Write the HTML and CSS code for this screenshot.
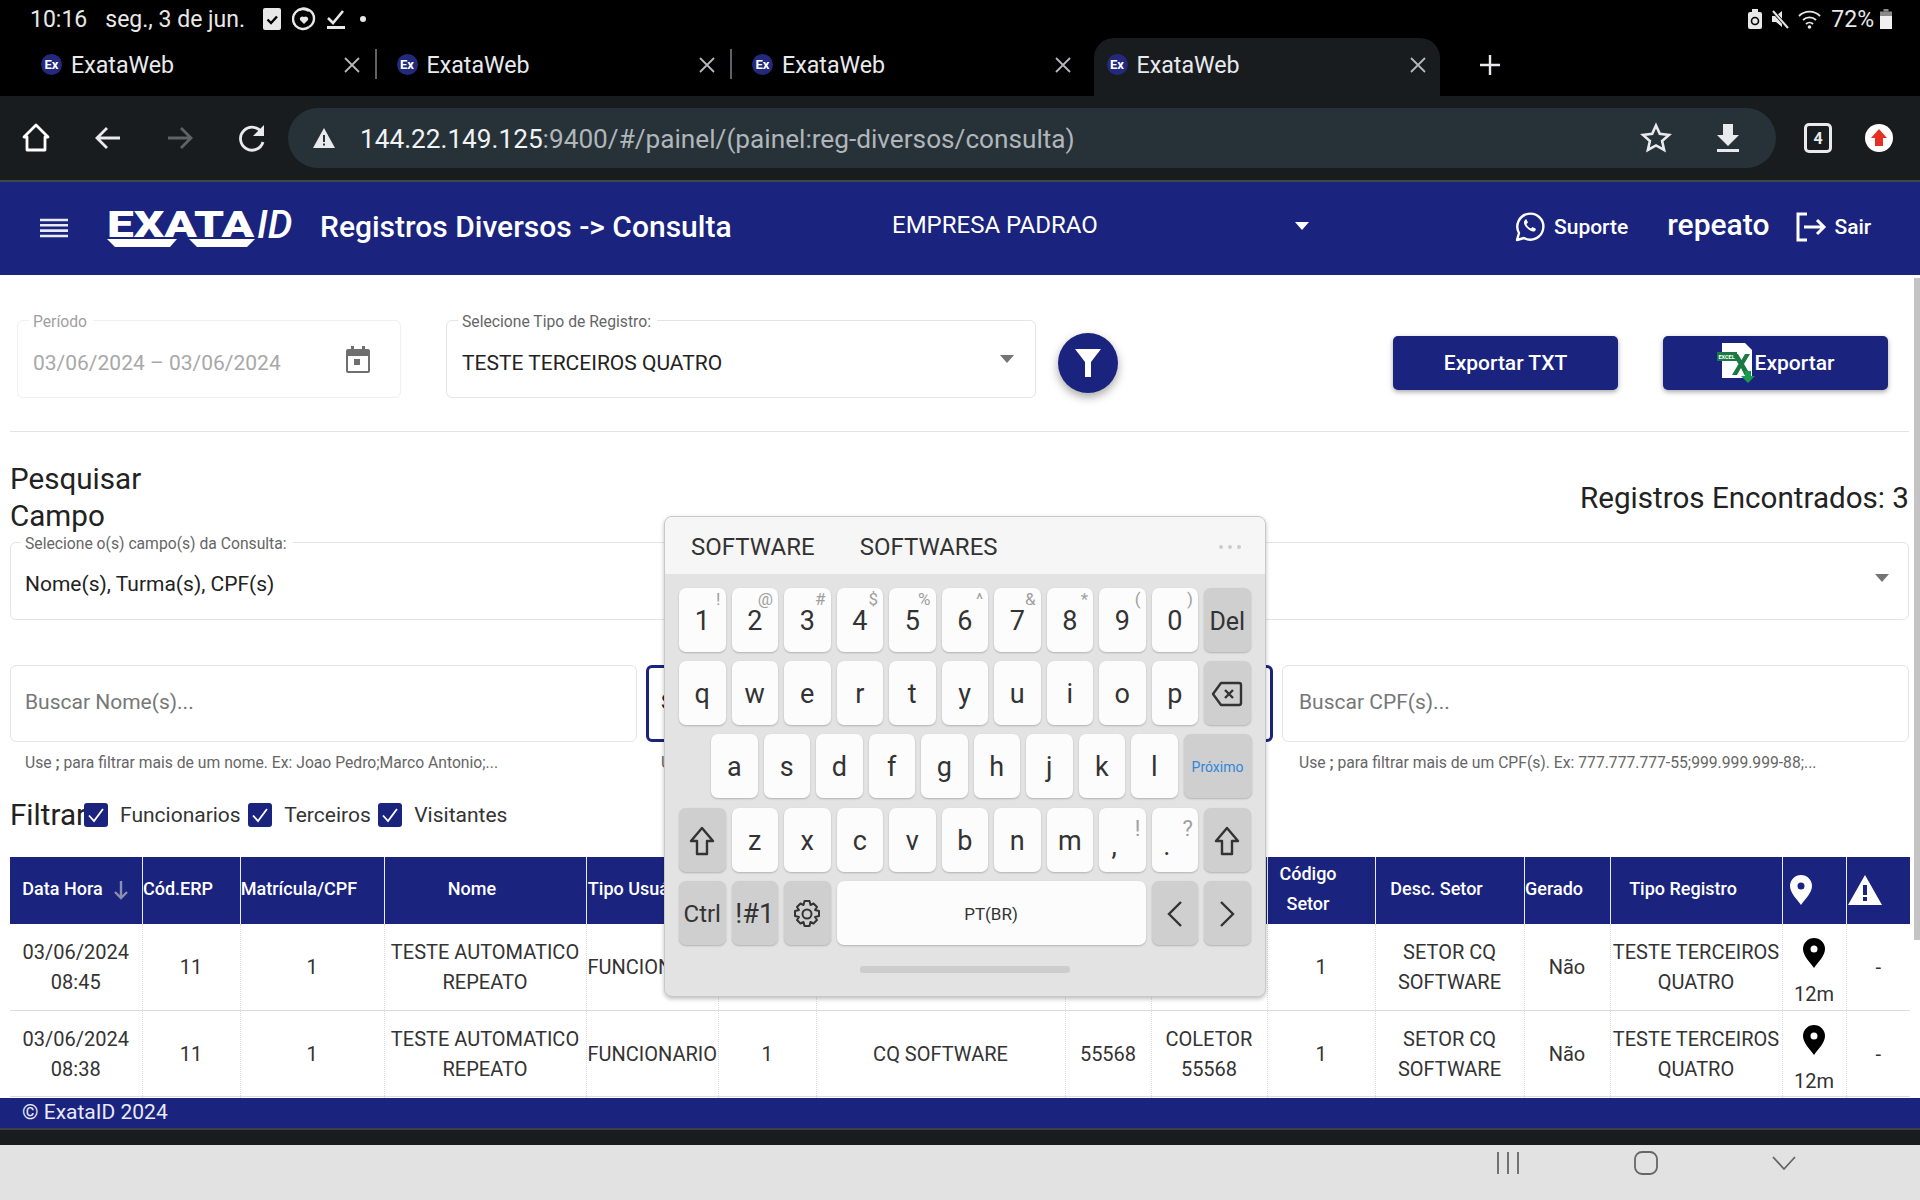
FILE: index.html
```html
<!DOCTYPE html>
<html lang="pt-BR">
<head>
  <meta charset="UTF-8" />
  <title>ExataWeb</title>
  <link rel="stylesheet" href="styles.css">
</head>
<body>
  <div class="status-bar">
    <span class="clock">10:16</span>
    <span class="date">seg., 3 de jun.</span>
    <svg class="st-icon" width="22" height="24" viewBox="0 0 22 24"><rect x="2" y="1" width="18" height="22" rx="2" fill="#e8e8e8"/><path d="M6.500 12.500l3.500 3.500 6-6.500" fill="none" stroke="#000" stroke-width="2.400"/></svg>
    <svg class="st-icon" width="24" height="24" viewBox="0 0 24 24"><path d="M17 4a10 10 0 1 0 0 16" fill="none" stroke="#e8e8e8" stroke-width="2.400"/><path d="M7 3a10 10 0 0 1 15 9 10 10 0 0 1-5 8" fill="none" stroke="#e8e8e8" stroke-width="2.400"/><path d="M12 17l-4-4a2.600 2.600 0 0 1 4-3 2.600 2.600 0 0 1 4 3z" fill="#e8e8e8"/></svg>
    <svg class="st-icon" width="22" height="24" viewBox="0 0 22 24"><path d="M3 11l5 5 10-12" fill="none" stroke="#e8e8e8" stroke-width="2.600"/><rect x="2" y="19" width="18" height="3" fill="#e8e8e8"/></svg>
    <span class="st-dot"></span>
    <span class="st-right">
      <svg width="16" height="22" viewBox="0 0 16 22"><path d="M5 1h6v3h2a2 2 0 0 1 2 2v13a2 2 0 0 1-2 2H3a2 2 0 0 1-2-2V6a2 2 0 0 1 2-2h2z" fill="#e8e8e8"/><circle cx="8" cy="13" r="3.500" fill="none" stroke="#000" stroke-width="1.600"/></svg>
      <svg width="22" height="22" viewBox="0 0 22 22"><path d="M3 8h4l6-5v16l-6-5H3z" fill="#e8e8e8"/><path d="M3 2l16 18" stroke="#000" stroke-width="3.400"/><path d="M4 3l15 17" stroke="#e8e8e8" stroke-width="2"/></svg>
      <svg width="26" height="22" viewBox="0 0 26 22"><g fill="none" stroke="#e8e8e8" stroke-width="1.800"><path d="M2 8a15 15 0 0 1 21 0"/><path d="M6 12a9.500 9.500 0 0 1 13 0"/><path d="M9 16a5 5 0 0 1 7 0"/></g><circle cx="12.500" cy="19" r="1.800" fill="#e8e8e8"/></svg>
      <span class="battery-text">72%</span>
      <svg width="12" height="24" viewBox="0 0 12 24"><rect x="3.500" y="2" width="5" height="2.500" fill="#8a8a8a"/><rect x="0" y="4.500" width="12" height="5" fill="#8a8a8a"/><rect x="0" y="9" width="12" height="13" fill="#f0f0f0"/></svg>
    </span>
  </div>

  <div class="tab-strip">
    <div class="tab">
      <span class="favicon">Ex</span><span class="tab-title">ExataWeb</span>
      <svg class="tab-close" width="16" height="16" viewBox="0 0 16 16"><path d="M1 1l14 14M15 1L1 15" stroke="#b5b8bb" stroke-width="1.800"/></svg>
    </div>
    <div class="tab">
      <span class="favicon">Ex</span><span class="tab-title">ExataWeb</span>
      <svg class="tab-close" width="16" height="16" viewBox="0 0 16 16"><path d="M1 1l14 14M15 1L1 15" stroke="#b5b8bb" stroke-width="1.800"/></svg>
    </div>
    <div class="tab tab-third">
      <span class="favicon">Ex</span><span class="tab-title">ExataWeb</span>
      <svg class="tab-close" width="16" height="16" viewBox="0 0 16 16"><path d="M1 1l14 14M15 1L1 15" stroke="#b5b8bb" stroke-width="1.800"/></svg>
    </div>
    <div class="tab tab-active">
      <span class="favicon">Ex</span><span class="tab-title">ExataWeb</span>
      <svg class="tab-close" width="16" height="16" viewBox="0 0 16 16"><path d="M1 1l14 14M15 1L1 15" stroke="#b5b8bb" stroke-width="1.800"/></svg>
    </div>
    <svg class="tab-new" width="24" height="24" viewBox="0 0 24 24"><path d="M12 2v20M2 12h20" stroke="#e8eaed" stroke-width="2.400"/></svg>
  </div>

  <div class="toolbar">
    <svg class="tb-icon" width="32" height="32" viewBox="0 0 32 32"><path d="M16 3L4 15v0h3v13h18V15h3z" fill="none" stroke="#fff" stroke-width="2.800" stroke-linejoin="round"/></svg>
    <svg class="tb-icon" width="32" height="32" viewBox="0 0 32 32"><path d="M28 16H6M15 6L5 16l10 10" fill="none" stroke="#e8eaed" stroke-width="2.800"/></svg>
    <svg class="tb-icon" width="32" height="32" viewBox="0 0 32 32"><path d="M4 16h22M17 6l10 10-10 10" fill="none" stroke="#5f6368" stroke-width="2.800"/></svg>
    <svg class="tb-icon" width="32" height="32" viewBox="0 0 32 32"><path d="M26 11a11.500 11.500 0 1 0 1 9" fill="none" stroke="#e8eaed" stroke-width="2.800"/><path d="M28 3v11H17z" fill="#e8eaed"/></svg>
    <div class="url-pill">
      <svg class="url-warn" width="24" height="22" viewBox="0 0 24 22"><path d="M12 1l11 20H1z" fill="#e8eaed"/><rect x="11" y="8" width="2" height="7" fill="#263238"/><rect x="11" y="16.500" width="2" height="2" fill="#263238"/></svg>
      <span class="url-text"><span class="url-host">144.22.149.125</span>:9400/#/painel/(painel:reg-diversos/consulta)</span>
      <svg class="url-star" width="32" height="32" viewBox="0 0 32 32"><path d="M16 3.500l3.800 8.400 9.200 1-6.900 6.100 2 9-8.100-4.600L7.900 28l2-9L3 12.900l9.200-1z" fill="none" stroke="#e8eaed" stroke-width="2.600"/></svg>
      <svg class="url-down" width="28" height="32" viewBox="0 0 28 32"><path d="M9 2h10v11h6L14 24 3 13h6z" fill="#e8eaed"/><rect x="3" y="27" width="22" height="3" fill="#e8eaed"/></svg>
    </div>
    <span class="tab-count">4</span>
    <span class="avatar">
      <svg width="18" height="20" viewBox="0 0 18 20"><path d="M9 1l8 9h-4v8H5v-8H1z" fill="#e53124"/></svg>
    </span>
  </div>
  <div class="toolbar-line"></div>

  <header class="app-header">
    <svg class="menu-icon" width="28" height="20" viewBox="0 0 28 20"><path d="M0 2h28M0 7.300h28M0 12.600h28M0 18h28" stroke="#e8eaf6" stroke-width="2.600"/></svg>
    <div class="logo">
      <span class="logo-main">EXATA</span><span class="logo-id">ID</span>
      <svg class="logo-swoosh" width="148" height="9" viewBox="0 0 148 9"><path d="M0 0h70l-7 8H8zM82 0h66l-8 8H90z" fill="#fff"/></svg>
    </div>
    <h1 class="page-title">Registros Diversos -&gt; Consulta</h1>
    <span class="company">EMPRESA PADRAO</span>
    <span class="company-caret"></span>
    <svg class="wa-icon" width="32" height="32" viewBox="0 0 32 32"><path d="M3 29l2-7a13 13 0 1 1 5 5z" fill="none" stroke="#fff" stroke-width="2.400" stroke-linejoin="round"/><path d="M11 9c-2 2-1 5 2 8s6 4.500 8 3c1-1 1-2 .5-2.500l-3-1.500-1.500 1.500c-2-.5-4-2.500-4.500-4.500l1.500-1.500-1.500-3c-.5-.5-1-.500-1.500.5z" fill="#fff"/></svg>
    <span class="head-link">Suporte</span>
    <span class="user-name">repeato</span>
    <svg class="exit-icon" width="32" height="32" viewBox="0 0 32 32"><path d="M12 3H3v26h9" fill="none" stroke="#fff" stroke-width="3"/><path d="M9 16h20M22 9l7 7-7 7" fill="none" stroke="#fff" stroke-width="3"/></svg>
    <span class="head-link">Sair</span>
  </header>

  <main class="content">
    <div class="top-row">
      <div class="field field-period">
        <label class="field-label">Período</label>
        <span class="field-value muted">03/06/2024 – 03/06/2024</span>
        <svg class="cal-icon" width="26" height="28" viewBox="0 0 26 28"><path d="M3 4h3V1h3v3h8V1h3v3h3a2 2 0 0 1 2 2v20a2 2 0 0 1-2 2H3a2 2 0 0 1-2-2V6a2 2 0 0 1 2-2zm0 7v15h20V11z" fill="#6f6f6f"/><rect x="9" y="14" width="6" height="6" fill="#6f6f6f"/></svg>
      </div>
      <div class="field field-type">
        <label class="field-label">Selecione Tipo de Registro:</label>
        <span class="field-value">TESTE TERCEIROS QUATRO</span>
        <span class="caret"></span>
      </div>
      <button class="fab" type="button">
        <svg width="28" height="30" viewBox="0 0 28 30"><path d="M1 1h26L17 14v15h-6V14z" fill="#fff"/></svg>
      </button>
      <button class="export-btn export-txt" type="button">Exportar TXT</button>
      <button class="export-btn" type="button">
        <svg width="38" height="40" viewBox="0 0 38 40"><path d="M5 0h23l7 7v28H5z" fill="#fff"/><path d="M15 11h6l3.500 6 3.500-6h5l-6 10 6.500 11h-6l-3.500-7-4 7h-5l6.500-11z" fill="#1b7a43"/><rect x="0" y="9" width="20" height="9" fill="#1b7a43"/><text class="excel-tag" x="1.500" y="16">EXCEL</text><path d="M28 28h6v5h4l-7 7-7-7h4z" fill="#1b9a4f"/></svg>
        Exportar
      </button>
    </div>
    <hr class="divider">

    <div class="search-head">
      <h2 class="search-title">Pesquisar<br>Campo</h2>
      <span class="found">Registros Encontrados: 3</span>
    </div>
    <div class="field field-wide">
      <label class="field-label">Selecione o(s) campo(s) da Consulta:</label>
      <span class="field-value">Nome(s), Turma(s), CPF(s)</span>
      <span class="caret"></span>
    </div>

    <div class="search-grid">
      <div>
        <div class="search-box">Buscar Nome(s)...</div>
        <p class="hint">Use <b>;</b> para filtrar mais de um nome. Ex: Joao Pedro;Marco Antonio;...</p>
      </div>
      <div>
        <div class="search-box search-focus">SOFTWARE</div>
        <p class="hint">Use <b>;</b> para filtrar mais de uma turma.</p>
      </div>
      <div class="search-cpf">
        <div class="search-box">Buscar CPF(s)...</div>
        <p class="hint">Use <b>;</b> para filtrar mais de um CPF(s). Ex: 777.777.777-55;999.999.999-88;...</p>
      </div>
    </div>

    <div class="filter-row">
      <span class="filter-title">Filtrar</span>
      <span class="check"><svg width="24" height="24" viewBox="0 0 24 24"><path d="M5 12.500l5 5.500 9-12" fill="none" stroke="#fff" stroke-width="1.800"/></svg></span>
      <span class="check-label">Funcionarios</span>
      <span class="check"><svg width="24" height="24" viewBox="0 0 24 24"><path d="M5 12.500l5 5.500 9-12" fill="none" stroke="#fff" stroke-width="1.800"/></svg></span>
      <span class="check-label">Terceiros</span>
      <span class="check"><svg width="24" height="24" viewBox="0 0 24 24"><path d="M5 12.500l5 5.500 9-12" fill="none" stroke="#fff" stroke-width="1.800"/></svg></span>
      <span class="check-label">Visitantes</span>
    </div>

    <table class="reg-table">
      <colgroup>
        <col class="c-132"><col class="c-98"><col class="c-144"><col class="c-202"><col class="c-132"><col class="c-98"><col class="c-249"><col class="c-86"><col class="c-116"><col class="c-108"><col class="c-149"><col class="c-86"><col class="c-172"><col class="c-64"><col class="c-64">
      </colgroup>
      <thead>
        <tr>
          <th class="th-sort">Data Hora <svg width="16" height="20" viewBox="0 0 16 20"><path d="M8 1v17M2 12l6 6 6-6" fill="none" stroke="#8c8fb0" stroke-width="2.400"/></svg></th>
          <th>Cód.ERP</th>
          <th>Matrícula/CPF</th>
          <th>Nome</th>
          <th>Tipo Usuário</th>
          <th></th>
          <th></th>
          <th></th>
          <th></th>
          <th>Código<br>Setor</th>
          <th>Desc. Setor</th>
          <th>Gerado</th>
          <th>Tipo Registro</th>
          <th><svg class="th-icon" width="22" height="30" viewBox="0 0 22 30"><path d="M11 0a11 11 0 0 1 11 11c0 7-7 13-11 19C7 24 0 18 0 11A11 11 0 0 1 11 0zm0 7.500a3.500 3.500 0 1 0 0 7 3.500 3.500 0 0 0 0-7z" fill="#fff" fill-rule="evenodd"/></svg></th>
          <th><svg class="th-icon" width="34" height="30" viewBox="0 0 34 30"><path d="M17 0l17 30H0zM15 10v10h4V10zm0 12v4h4v-4z" fill="#fff" fill-rule="evenodd"/></svg></th>
        </tr>
      </thead>
      <tbody>
        <tr>
          <td>03/06/2024<br>08:45</td><td>11</td><td>1</td><td>TESTE AUTOMATICO<br>REPEATO</td><td class="td-left">FUNCIONARIO</td><td>1</td><td>CQ SOFTWARE</td><td>55568</td><td>COLETOR<br>55568</td><td>1</td><td>SETOR CQ<br>SOFTWARE</td><td>Não</td><td>TESTE TERCEIROS<br>QUATRO</td>
          <td class="td-pin"><svg width="22" height="30" viewBox="0 0 22 30"><path d="M11 0a11 11 0 0 1 11 11c0 7-7 13-11 19C7 24 0 18 0 11A11 11 0 0 1 11 0zm0 7.500a3.500 3.500 0 1 0 0 7 3.500 3.500 0 0 0 0-7z" fill="#000" fill-rule="evenodd"/></svg><br>12m</td><td>-</td>
        </tr>
        <tr>
          <td>03/06/2024<br>08:38</td><td>11</td><td>1</td><td>TESTE AUTOMATICO<br>REPEATO</td><td class="td-left">FUNCIONARIO</td><td>1</td><td>CQ SOFTWARE</td><td>55568</td><td>COLETOR<br>55568</td><td>1</td><td>SETOR CQ<br>SOFTWARE</td><td>Não</td><td>TESTE TERCEIROS<br>QUATRO</td>
          <td class="td-pin"><svg width="22" height="30" viewBox="0 0 22 30"><path d="M11 0a11 11 0 0 1 11 11c0 7-7 13-11 19C7 24 0 18 0 11A11 11 0 0 1 11 0zm0 7.500a3.500 3.500 0 1 0 0 7 3.500 3.500 0 0 0 0-7z" fill="#000" fill-rule="evenodd"/></svg><br>12m</td><td>-</td>
        </tr>
        <tr>
          <td></td><td></td><td></td><td></td><td></td><td></td><td></td><td></td><td></td><td></td><td></td><td></td><td></td><td></td><td></td>
        </tr>
      </tbody>
    </table>
    <div class="scrollbar"></div>
  </main>

  <footer class="app-footer">© ExataID 2024</footer>
  <div class="bottom-line"></div>
  <div class="bottom-dark"></div>
  <nav class="nav-bar">
    <svg width="26" height="24" viewBox="0 0 26 24"><path d="M3 1v22M13 1v22M23 1v22" stroke="#666" stroke-width="1.800"/></svg>
    <svg width="26" height="24" viewBox="0 0 26 24"><rect x="2" y="1" width="22" height="22" rx="7" fill="none" stroke="#666" stroke-width="1.800"/></svg>
    <svg width="26" height="24" viewBox="0 0 26 24"><path d="M2 6l11 12L24 6" fill="none" stroke="#666" stroke-width="1.800"/></svg>
  </nav>

  <!-- teclado flutuante por cima da pagina -->
  <div class="keyboard">
    <div class="kb-suggest">
      <span>SOFTWARE</span>
      <span>SOFTWARES</span>
      <span class="kb-dots"></span>
    </div>
    <div class="kb-row">
      <span class="key">1<i>!</i></span><span class="key">2<i>@</i></span><span class="key">3<i>#</i></span><span class="key">4<i>$</i></span><span class="key">5<i>%</i></span><span class="key">6<i>^</i></span><span class="key">7<i>&amp;</i></span><span class="key">8<i>*</i></span><span class="key">9<i>(</i></span><span class="key">0<i>)</i></span><span class="key key-fn">Del</span>
    </div>
    <div class="kb-row">
      <span class="key">q</span><span class="key">w</span><span class="key">e</span><span class="key">r</span><span class="key">t</span><span class="key">y</span><span class="key">u</span><span class="key">i</span><span class="key">o</span><span class="key">p</span>
      <span class="key key-fn"><svg width="32" height="26" viewBox="0 0 32 26"><path d="M10 2h18a2 2 0 0 1 2 2v18a2 2 0 0 1-2 2H10L2 13z" fill="none" stroke="#333" stroke-width="2.400" stroke-linejoin="round"/><path d="M14 9l8 8M22 9l-8 8" stroke="#333" stroke-width="2.400"/></svg></span>
    </div>
    <div class="kb-row kb-row-home">
      <span class="key">a</span><span class="key">s</span><span class="key">d</span><span class="key">f</span><span class="key">g</span><span class="key">h</span><span class="key">j</span><span class="key">k</span><span class="key">l</span><span class="key key-fn key-next">Próximo</span>
    </div>
    <div class="kb-row">
      <span class="key key-fn"><svg width="26" height="30" viewBox="0 0 26 30"><path d="M13 2L2 15h6v13h10V15h6z" fill="none" stroke="#333" stroke-width="2.400" stroke-linejoin="round"/></svg></span>
      <span class="key">z</span><span class="key">x</span><span class="key">c</span><span class="key">v</span><span class="key">b</span><span class="key">n</span><span class="key">m</span>
      <span class="key key-punct">,<i>!</i></span><span class="key key-punct">.<i>?</i></span>
      <span class="key key-fn"><svg width="26" height="30" viewBox="0 0 26 30"><path d="M13 2L2 15h6v13h10V15h6z" fill="none" stroke="#333" stroke-width="2.400" stroke-linejoin="round"/></svg></span>
    </div>
    <div class="kb-row">
      <span class="key key-fn key-ctrl">Ctrl</span><span class="key key-fn key-sym">!#1</span>
      <span class="key key-fn"><svg width="28" height="30" viewBox="0 0 28 30"><path d="M11.500 2h5l1 4 3-1.500 3.500 3.500-2 3 4 1v5l-4 1 2 3-3.500 3.500-3-1.500-1 4h-5l-1-4-3 1.500L4 21l2-3-4-1v-5l4-1-2-3 3.500-3.500 3 1.500z" fill="none" stroke="#333" stroke-width="2" stroke-linejoin="round"/><circle cx="14" cy="15" r="4.500" fill="none" stroke="#333" stroke-width="2"/></svg></span>
      <span class="key key-space">PT(BR)</span>
      <span class="key key-fn"><svg width="16" height="28" viewBox="0 0 16 28"><path d="M14 2L2 14l12 12" fill="none" stroke="#333" stroke-width="2.400"/></svg></span>
      <span class="key key-fn"><svg width="16" height="28" viewBox="0 0 16 28"><path d="M2 2l12 12L2 26" fill="none" stroke="#333" stroke-width="2.400"/></svg></span>
    </div>
    <div class="kb-handle"></div>
  </div>
</body>
</html>
```

FILE: styles.css
```css
* {
  box-sizing: border-box;
}

html,
body {
  margin: 0;
  padding: 0;
}

body {
  width: 1920px;
  height: 1200px;
  overflow: hidden;
  position: relative;
  display: flex;
  flex-direction: column;
  font-family: Roboto, "Liberation Sans", sans-serif;
  background-color: #fff;
  color: #222;
}

/* status bar */
.status-bar {
  height: 38px;
  background-color: #000;
  color: #e8e8e8;
  display: flex;
  align-items: center;
  padding: 0 30px;
  font-size: 23px;
}

.clock {
  margin-right: 18px;
}

.date {
  margin-right: 16px;
}

.st-icon {
  margin-right: 9px;
}

.st-dot {
  width: 6px;
  height: 6px;
  border-radius: 50%;
  background-color: #e8e8e8;
  margin-left: 4px;
}

.st-right {
  margin-left: auto;
  margin-right: -2px;
  display: flex;
  align-items: center;
  gap: 6px;
}

.battery-text {
  margin-left: 2px;
}

/* tabs */
.tab-strip {
  height: 58px;
  background-color: #000;
  display: flex;
  align-items: center;
  padding-left: 29px;
}

.tab {
  width: 355.5px;
  height: 58px;
  display: flex;
  align-items: center;
  padding: 0 14px 5px 12px;
  color: #e8eaed;
  position: relative;
}

.tab::after {
  content: "";
  position: absolute;
  right: 8px;
  top: 11px;
  width: 2px;
  height: 30px;
  background-color: #5f6368;
}

.tab-third::after,
.tab-active::after {
  display: none;
}

.tab-active {
  background-color: #181c1f;
  border-radius: 20px 20px 0 0;
  width: 346px;
  margin-left: -2px;
  padding-left: 13px;
}

.favicon {
  width: 21px;
  height: 21px;
  border-radius: 50%;
  background-color: #232a7e;
  color: #fff;
  font-size: 13px;
  font-weight: 700;
  display: inline-flex;
  align-items: center;
  justify-content: center;
  margin-right: 9px;
}

.tab-title {
  font-size: 23.2px;
  flex: 1;
}

.tab-close {
  margin-right: 11px;
}

.tab-active .tab-close {
  margin-right: 0;
}

.tab-new {
  margin-left: 38px;
  margin-bottom: 5px;
}

/* toolbar */
.toolbar {
  height: 84px;
  background-color: #181c1f;
  display: flex;
  align-items: center;
  padding-left: 20px;
}

.tb-icon {
  margin-right: 40px;
}

.tb-icon:nth-child(4) {
  margin-right: 20px;
}

.url-pill {
  width: 1488px;
  height: 60px;
  background-color: #263238;
  border-radius: 30px;
  display: flex;
  align-items: center;
  padding-left: 24px;
  color: #b0b6ba;
  font-size: 26.2px;
}

.url-text {
  margin-left: 24px;
  margin-top: 2px;
  flex: 1;
}

.url-host {
  color: #f1f3f4;
}

.url-star {
  margin-right: 42px;
}

.url-down {
  margin-right: 34px;
}

.tab-count {
  margin-left: 28px;
  width: 28px;
  height: 30px;
  border: 3px solid #e8eaed;
  border-radius: 5px;
  color: #e8eaed;
  font-size: 16px;
  font-weight: 700;
  display: flex;
  align-items: center;
  justify-content: center;
}

.avatar {
  margin-left: 33px;
  width: 28px;
  height: 28px;
  border-radius: 50%;
  background-color: #fff;
  display: flex;
  align-items: center;
  justify-content: center;
}

.toolbar-line {
  height: 2px;
  background-color: #3d4a42;
}

/* app header */
.app-header {
  height: 93px;
  background-color: #1a237e;
  color: #fff;
  display: flex;
  align-items: center;
  padding: 0 0 4px 40px;
}

.menu-icon {
  margin-top: 3px;
  margin-right: 39px;
}

.logo {
  width: 192px;
  height: 37px;
  position: relative;
  display: flex;
  align-items: flex-start;
  margin-top: 7px;
  font-size: 36.5px;
  line-height: 26px;
}

.logo-main {
  display: inline-block;
  width: 148px;
  font-weight: 900;
  transform: scaleX(1.31);
  transform-origin: left;
}

.logo-id {
  margin-left: 2px;
  font-size: 39px;
  font-style: italic;
  font-weight: 500;
}

.logo-swoosh {
  position: absolute;
  left: 0;
  top: 27px;
}

.page-title {
  margin: 0 0 0 21px;
  width: 572px;
  font-size: 30px;
  font-weight: 500;
}

.company {
  font-size: 24px;
  width: 403px;
  margin-top: -4px;
}

.company-caret {
  width: 0;
  height: 0;
  border-left: 7px solid transparent;
  border-right: 7px solid transparent;
  border-top: 8px solid #fff;
  margin-top: -2px;
}

.wa-icon {
  margin-left: 205px;
  margin-right: 8px;
}

.head-link {
  font-size: 21px;
  font-weight: 500;
}

.user-name {
  font-size: 30px;
  font-weight: 500;
  margin-left: 39px;
  margin-top: -4px;
}

.exit-icon {
  margin-left: 26px;
  margin-right: 7px;
}

/* conteudo */
.content {
  flex: 1;
  min-height: 0;
  overflow: hidden;
  position: relative;
  padding: 45px 11px 0 10px;
}

.scrollbar {
  position: absolute;
  right: 0;
  top: 3px;
  width: 6px;
  height: 662px;
  background-color: #c4c4c4;
}

.top-row {
  display: flex;
  align-items: center;
  padding-left: 7px;
  height: 78px;
}

.field {
  position: relative;
  height: 78px;
  border: 1px solid #e4e4e4;
  border-radius: 6px;
  display: flex;
  align-items: center;
  padding: 6px 14px 0;
}

.top-row .field {
  padding: 7px 15px 0;
}

.field-label {
  position: absolute;
  left: 10px;
  top: -9px;
  padding: 0 6px 0 4px;
  background-color: #fff;
  font-size: 15.7px;
  line-height: 20px;
  color: #666;
}

.top-row .field-label {
  left: 11px;
}

.field-value {
  font-size: 21px;
}

.muted {
  color: #a8a8a8;
}

.field-period {
  width: 384px;
  border-color: #f0f0f0;
}

.field-period .field-label {
  color: #a0a0a0;
}

.cal-icon {
  position: absolute;
  right: 29px;
  top: 24px;
}

.field-type {
  width: 590px;
  margin-left: 45px;
}

.caret {
  position: absolute;
  right: 19px;
  top: 31px;
  width: 0;
  height: 0;
  border-left: 7px solid transparent;
  border-right: 7px solid transparent;
  border-top: 8px solid #757575;
}

.field-type .caret {
  right: 21px;
  top: 34px;
}

.fab {
  width: 60px;
  height: 60px;
  margin-left: 22px;
  margin-top: 8px;
  border: none;
  border-radius: 50%;
  background-color: #1a237e;
  box-shadow: 0 4px 10px rgba(0, 0, 0, 0.35);
  display: flex;
  align-items: center;
  justify-content: center;
}

.export-btn {
  width: 225px;
  height: 54px;
  margin-top: 8px;
  margin-left: 45px;
  border: none;
  border-radius: 5px;
  background-color: #1a237e;
  color: #fff;
  box-shadow: 0 2px 5px rgba(0, 0, 0, 0.35);
  font-family: inherit;
  font-size: 21px;
  font-weight: 500;
  display: flex;
  align-items: center;
  justify-content: center;
}

.export-txt {
  margin-left: 275px;
}

.excel-tag {
  font-size: 5.5px;
  font-weight: 700;
  fill: #fff;
}

.divider {
  margin: 33px 0 0;
  border: none;
  border-top: 1px solid #e4e4e4;
}

.search-head {
  display: flex;
  align-items: center;
  justify-content: space-between;
  margin-top: 29px;
}

.search-title {
  margin: 0;
  font-size: 29.6px;
  font-weight: 400;
  line-height: 37px;
}

.found {
  font-size: 29.6px;
}

.field-wide {
  margin-top: 7px;
}

.search-grid {
  display: grid;
  grid-template-columns: repeat(3, 1fr);
  gap: 9px;
  margin-top: 45px;
}

.search-box {
  height: 77px;
  border: 1px solid #e4e4e4;
  border-radius: 6px;
  display: flex;
  align-items: center;
  padding: 0 14px 3px;
  font-size: 21px;
  color: #777;
}

.search-focus {
  border: 3px solid #1a237e;
  padding-left: 12px;
  color: #222;
}

.search-cpf .search-box {
  padding-left: 16px;
}

.hint {
  margin: 11px 0 0 15px;
  font-size: 15.7px;
  line-height: 20px;
  color: #666;
}

.search-cpf .hint {
  margin-left: 17px;
}

.filter-row {
  display: flex;
  align-items: center;
  height: 30px;
  margin-top: 27px;
}

.filter-title {
  width: 74px;
  font-size: 29.6px;
}

.check {
  width: 24px;
  height: 24px;
  border-radius: 3px;
  background-color: #1a237e;
  display: flex;
}

.check-label {
  margin: 0 7.5px 0 12px;
  font-size: 21px;
  color: #333;
}

.reg-table {
  margin-top: 27px;
  width: 1900px;
  table-layout: fixed;
  border-collapse: collapse;
}

.c-132 { width: 132px; }
.c-98 { width: 98px; }
.c-144 { width: 144px; }
.c-202 { width: 202px; }
.c-249 { width: 249px; }
.c-86 { width: 86px; }
.c-116 { width: 116px; }
.c-108 { width: 108px; }
.c-149 { width: 149px; }
.c-172 { width: 172px; }
.c-64 { width: 64px; }

.reg-table th {
  height: 67px;
  padding: 0 26px 3px 0;
  background-color: #1a237e;
  color: #fff;
  font-size: 18px;
  font-weight: 500;
  line-height: 30px;
  border-right: 1px solid #e8eaf6;
  white-space: nowrap;
}

.reg-table th:last-child {
  border-right: none;
}

.reg-table .th-sort {
  padding: 0 0 3px;
}

.th-sort svg {
  vertical-align: -5px;
  margin-left: 6px;
}

.th-icon {
  transform: translateY(5px);
}

.reg-table td {
  height: 86px;
  padding: 1px 0 0;
  text-align: center;
  font-size: 20px;
  line-height: 30px;
  color: #333;
  border-right: 1px dotted #dcdcdc;
  border-bottom: 1px solid #dcdcdc;
  white-space: nowrap;
}

.reg-table td:last-child {
  border-right: none;
}

.reg-table .td-left {
  text-align: left;
  padding-left: 1px;
}

.td-pin svg {
  vertical-align: -2px;
  margin-bottom: 9px;
}

.reg-table .td-pin {
  line-height: 26px;
  padding-top: 12px;
}

/* rodape */
.app-footer {
  height: 30px;
  background-color: #1a237e;
  color: #e8eaf6;
  font-size: 21px;
  line-height: 28px;
  padding-left: 22px;
}

.bottom-line {
  height: 2px;
  background-color: #3c4043;
}

.bottom-dark {
  height: 15px;
  background-color: #181c1f;
}

.nav-bar {
  height: 55px;
  background-color: #e2e2e2;
  display: flex;
  padding: 6px 0 0 1495px;
  gap: 112px;
  align-items: flex-start;
}

/* teclado */
.keyboard {
  position: absolute;
  left: 664px;
  top: 516px;
  width: 602px;
  height: 481px;
  background-color: #e3e3e3;
  border: 1px solid #c8c8c8;
  border-radius: 8px;
  box-shadow: 0 2px 4px rgba(0, 0, 0, 0.25);
  overflow: hidden;
}

.kb-suggest {
  height: 57px;
  background-color: #f6f6f6;
  display: flex;
  align-items: center;
  padding: 2px 0 0 26px;
  gap: 45px;
  font-size: 24px;
  color: #333;
  margin-bottom: 14px;
}

.kb-dots {
  margin-left: auto;
  margin-right: 33px;
  width: 4px;
  height: 4px;
  border-radius: 50%;
  background-color: #ccc;
  box-shadow: 9px 0 #ccc, 18px 0 #ccc;
  transform: translateX(-9px);
}

.kb-row {
  display: grid;
  grid-template-columns: repeat(11, 46.5px);
  gap: 6px;
  height: 64px;
  margin: 0 0 9.2px 14px;
}

.kb-row-home {
  grid-template-columns: repeat(9, 46.5px) 68px;
  margin-left: 46px;
}

.key {
  position: relative;
  display: flex;
  align-items: center;
  justify-content: center;
  background-color: #fcfcfc;
  border-radius: 7px;
  box-shadow: 0 1px 2px rgba(0, 0, 0, 0.22);
  font-size: 27px;
  color: #333;
  padding-top: 2px;
}

.key i {
  position: absolute;
  right: 5px;
  top: 1px;
  font-style: normal;
  font-size: 17px;
  color: #a0a0a0;
}

.key-punct {
  padding: 12px 16px 0 0;
}

.key-punct i {
  top: 8px;
  font-size: 22px;
}

.key-fn {
  background-color: #cfcfcf;
  font-size: 25px;
}

.key-ctrl {
  font-size: 24px;
}

.key-sym {
  font-size: 27px;
}

.key-next {
  font-size: 14px;
  color: #2f86d9;
}

.key-space {
  grid-column: span 6;
  font-size: 17px;
}

.kb-handle {
  width: 210px;
  height: 7px;
  margin: 21px 0 0 195px;
  border-radius: 3px;
  background-color: #cdcdcd;
}
```
